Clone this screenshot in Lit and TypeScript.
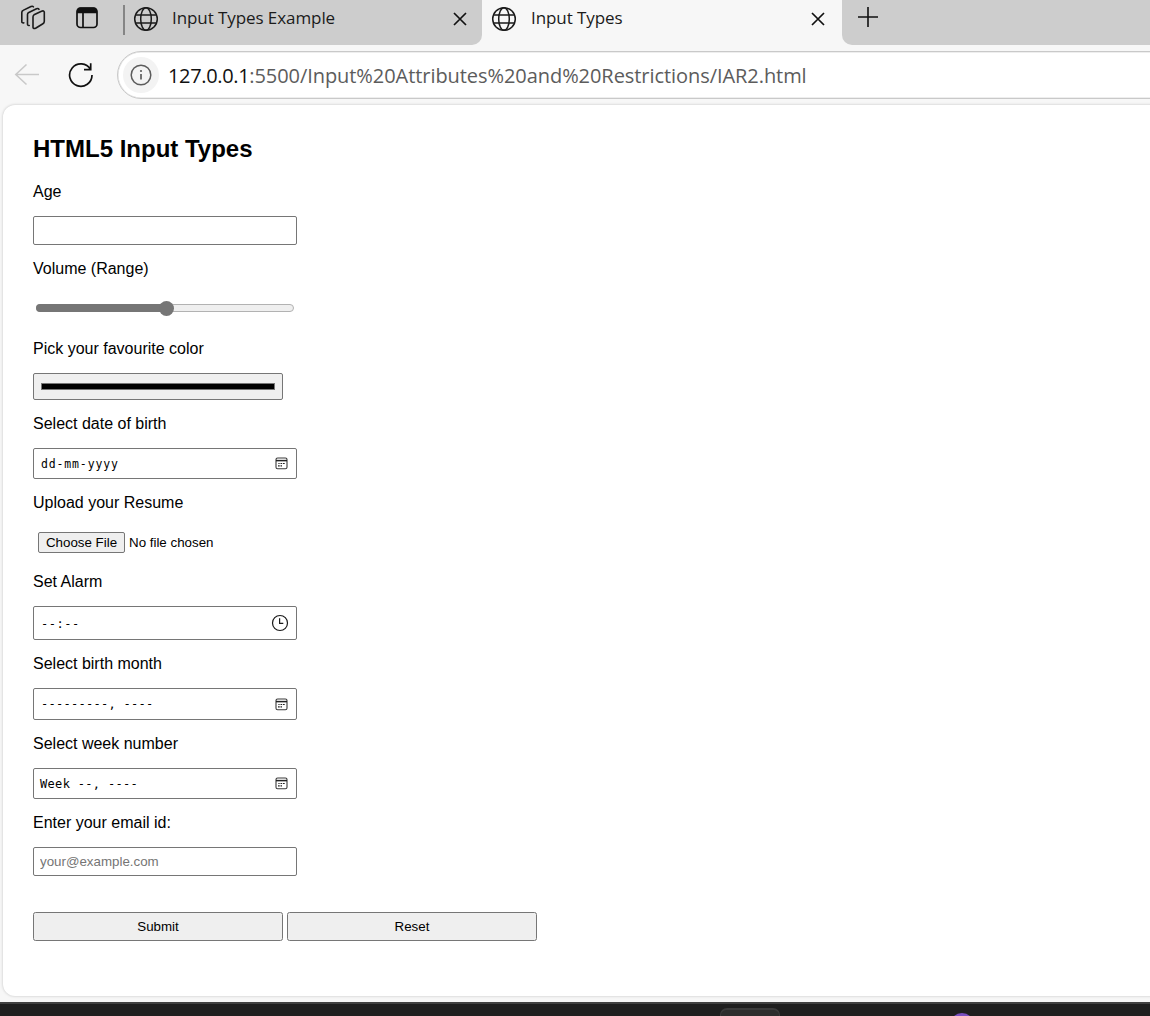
import { LitElement, html, css, svg } from "lit";
import { customElement } from "lit/decorators.js";

const globe = svg`<svg class="ic" width="26" height="26" viewBox="0 0 26 26" fill="none" stroke="#1b1b1b" stroke-width="1.5">
  <circle cx="13" cy="13" r="11.3"/><ellipse cx="13" cy="13" rx="5.3" ry="11.3"/><path d="M2.6 8.9h20.8M2.6 17.1h20.8"/></svg>`;
const cross = svg`<svg class="ic" width="14" height="14" viewBox="0 0 14 14" fill="none" stroke="#111" stroke-width="1.7"><path d="M1 1l12 12M13 1L1 13"/></svg>`;
const calendar = svg`<svg class="ic" width="13" height="13" viewBox="0 0 13 13" fill="none" stroke="#3a3a3a" stroke-width="1.1">
  <rect x="1" y="1" width="11" height="10.8" rx="1.6"/><path d="M1 3.6h11" stroke-width="1.5" stroke="#222"/>
  <path d="M5.5 6.5h1.700M8 6.5h1.700M3 8.900h1.700M5.500 8.900h1.500M3.400 6.500h1.200" stroke-width="1.200" stroke="#222"/></svg>`;
const clock = svg`<svg class="ic clock" width="18" height="18" viewBox="0 0 18 18" fill="none" stroke="#1a1a1a" stroke-width="1.2"><circle cx="9" cy="9" r="7.500"/><path d="M8.600 4.200v5.200h3.700"/></svg>`;

@customElement("browser-chrome")
class BrowserChrome extends LitElement {
  static styles = css`
    :host { display: block; font-family: "Open Sans", "Noto Sans", sans-serif; background: #f7f7f7; }
    .ic { display: block; flex: none; }
    .tabs { display: flex; height: 45px; background: #f7f7f7; }
    .left { display: flex; box-sizing: border-box; width: 482px; background: #cdcdcd; border-radius: 0 0 10px 0; padding-left: 19px; }
    .right { flex: 1; background: #cdcdcd; border-radius: 0 0 0 10px; padding: 6px 0 0 15px; }
    .spaces { margin-top: 4px; }
    .panel { margin: 6px 0 0 29px; }
    .sep { width: 1.500px; height: 30px; margin: 5px 8.500px 0 25px; background: #858585; }
    .tab { display: flex; height: 37px; align-items: center; flex: 1; }
    .active { box-sizing: border-box; flex: none; width: 360px; padding-left: 9px; }
    .title { flex: 1; margin: -2px 0 0 13px; font-size: 17px; line-height: 24px; color: #1b1b1b; white-space: nowrap; letter-spacing: -0.08px; }
    .t2 { margin-left: 14px; }
    .close { margin-right: 15px; }
    .active .close { margin-right: 17px; }
    .bar { display: flex; height: 60px; overflow: hidden; }
    .back { margin: 18px 0 0 14px; }
    .reload { margin: 17px 0 0 28px; }
    .pill { display: flex; align-items: center; box-sizing: border-box; width: 1100px; flex: none; height: 48px; margin: 6px 0 0 22px;
      border: 1px solid #c9c9c9; border-radius: 24px; background: #fff; padding-left: 5px; box-shadow: inset 0 0 0 0.500px #dedede; }
    .info { display: grid; place-items: center; width: 36px; height: 36px; border-radius: 50%; background: #f3f3f3; }
    .url { margin: 1px 0 0 9px; font-size: 20px; letter-spacing: -0.062px; color: #5c5c5c; white-space: nowrap; line-height: 28px; }
    .host { color: #111; letter-spacing: -0.350px; }
  `;
  render() {
    return html`
      <div class="tabs">
        <div class="left">
          <svg class="ic spaces" width="28" height="28" viewBox="0 0 28 28" fill="none" stroke="#1b1b1b" stroke-width="1.6" stroke-linejoin="round" stroke-linecap="round">
            <path d="M15 10.800L22.500 7.200q2.500-1 2.800 1V17.300q0 1.700-1.400 2.500L17 24Q14.300 25.300 14 23.300V13q0-1.500 1-2.200Z"/>
            <path d="M10.200 21.500q-1.700.3-1.700-1.500V10.500q0-1.500 1.300-2.100L17.500 4.800q1.800-.7 2.500.5"/>
            <path d="M4.800 18.900q-2 .3-2-1.500V8.400q0-1.400 1.300-2L12 2.500q1.700-.7 2.400.4"/>
          </svg>
          <svg class="ic panel" width="22" height="23" viewBox="0 0 22 23" fill="none" stroke="#111" stroke-width="1.7">
            <rect x="1" y="2" width="20" height="19.500" rx="3.500"/><path d="M1 7V5q0-3.500 3.500-3.500h13Q21 1.500 21 5v2Z" fill="#111" stroke="none"/><path d="M1 6.500h20M7 7v14.500"/>
          </svg>
          <div class="sep"></div>
          <div class="tab">${globe}<span class="title">Input Types Example</span><span class="close">${cross}</span></div>
        </div>
        <div class="tab active">${globe}<span class="title t2">Input Types</span><span class="close">${cross}</span></div>
        <div class="right"><svg class="ic" width="22" height="22" viewBox="0 0 22 22" stroke="#111" stroke-width="1.6"><path d="M11 1v20M1 11h20"/></svg></div>
      </div>
      <div class="bar">
        <svg class="ic back" width="26" height="24" viewBox="0 0 26 24" fill="none" stroke="#c9c9c9" stroke-width="1.6"><path d="M25 11.500H2M12.500 1.500L1.800 11.500L12.500 21.500"/></svg>
        <svg class="ic reload" width="27" height="27" viewBox="0 0 27 27" fill="none" stroke="#111" stroke-width="1.700"><path d="M22.500 7.500A11.200 11.200 0 1 0 24 13M22.700 1.200v6.500h-6.700"/></svg>
        <div class="pill">
          <span class="info"><svg class="ic" width="22" height="22" viewBox="0 0 22 22" fill="none" stroke="#5c5c5c" stroke-width="1.500"><circle cx="11" cy="11" r="9.800"/><path d="M11 10v5.500" stroke-width="1.700"/><circle cx="11" cy="7" r="1.100" fill="#5c5c5c" stroke="none"/></svg></span>
          <span class="url"><span class="host">127.0.0.1</span>:5500/Input%20Attributes%20and%20Restrictions/IAR2.html</span>
        </div>
      </div>`;
  }
}

@customElement("input-form")
class InputForm extends LitElement {
  static styles = css`
    :host { display: block; font-family: "Liberation Sans", Arial, sans-serif; color: #000; }
    .ic { display: block; flex: none; }
    .clock { margin-right: -1px; }
    .form { padding: 30px 0 0 30px; }
    .h { margin: 0 0 20px; font-size: 24px; line-height: 28px; font-weight: 700; }
    .label { display: block; font-size: 16px; line-height: 18px; margin-bottom: 15px; }
    .box { display: flex; align-items: center; justify-content: space-between; box-sizing: border-box; width: 264px; height: 29px; margin: 0 0 15px;
      border: 1px solid #767676; border-radius: 2px; background: #fff; padding: 0 8px 0 7px; font-size: 13.333px; font-family: inherit; outline: none; }
    .h31 { height: 31px; } .h32 { height: 32px; } .h34 { height: 34px; }
    .mono { font-family: "DejaVu Sans Mono", monospace; font-size: 12px; letter-spacing: 0.27px; white-space: pre; line-height: 16px; }
    .dmy { font-size: 11.500px; letter-spacing: 0.850px; }
    .time { letter-spacing: 0.500px; padding-top: 2px; }
    .week { margin-left: -1px; font-size: 12px; letter-spacing: 0.320px; }
    .email { padding-left: 6px; }
    .email::placeholder { color: #757575; }
    .range { display: flex; align-items: center; width: 258px; height: 32px; margin: 0 3px 15px; }
    .track { display: flex; align-items: center; box-sizing: border-box; width: 258px; height: 8px; margin-top: -2px; border: 1px solid #b2b2b2; border-radius: 4px; background: #efefef; }
    .fill { flex: none; width: 130px; height: 8px; margin-left: -1px; border-radius: 4px 0 0 4px; background: #767676; }
    .thumb { flex: none; width: 15px; height: 15px; margin-left: -7.500px; border-radius: 50%; background: #767676; }
    .color { display: flex; align-items: center; box-sizing: border-box; width: 250px; height: 27px; margin-bottom: 15px; padding: 0 7px; border: 1px solid #767676; border-radius: 2px; background: #efefef; }
    .swatch { box-sizing: border-box; width: 234px; height: 7px; background: #000; border: 1px solid #777; }
    .file { display: flex; align-items: center; gap: 4px; height: 31px; padding-left: 5px; margin-bottom: 15px; font-size: 13.333px; }
    .btn { box-sizing: border-box; font: 13.333px "Liberation Sans", Arial, sans-serif; color: #000; border: 1px solid #767676; border-radius: 2px; background: #efefef; padding: 0; margin: 0; }
    .choose { width: 87px; height: 21px; }
    .actions { display: flex; gap: 4px; padding-top: 21px; }
    .wide { width: 250px; height: 29px; border-radius: 2.500px; }
  `;
  render() {
    return html`<div class="form">
      <h2 class="h">HTML5 Input Types</h2>
      <span class="label">Age</span><input class="box" />
      <span class="label">Volume (Range)</span>
      <div class="range"><div class="track"><div class="fill"></div><div class="thumb"></div></div></div>
      <span class="label">Pick your favourite color</span>
      <div class="color"><div class="swatch"></div></div>
      <span class="label">Select date of birth</span>
      <div class="box h31"><span class="mono dmy">dd-mm-yyyy</span>${calendar}</div>
      <span class="label">Upload your Resume</span>
      <div class="file"><button class="btn choose">Choose File</button><span>No file chosen</span></div>
      <span class="label">Set Alarm</span>
      <div class="box h34"><span class="mono time">--:--</span>${clock}</div>
      <span class="label">Select birth month</span>
      <div class="box h32"><span class="mono">---------, ----</span>${calendar}</div>
      <span class="label">Select week number</span>
      <div class="box h31"><span class="mono week">Week --, ----</span>${calendar}</div>
      <span class="label">Enter your email id:</span>
      <input class="box email" placeholder="your@example.com" />
      <div class="actions"><button class="btn wide">Submit</button><button class="btn wide">Reset</button></div>
    </div>`;
  }
}

@customElement("app-root")
class AppRoot extends LitElement {
  static styles = css`
    :host { display: flex; flex-direction: column; width: 1150px; height: 1016px; overflow: hidden; background: #f7f7f7; }
    .page { box-sizing: border-box; width: 1170px; height: 891px; margin-left: 3px; background: #fff; border-radius: 12px; box-shadow: 0 0 3px rgba(0, 0, 0, 0.22); flex: none; }
    .taskbar { display: flex; align-items: flex-start; box-sizing: border-box; height: 14px; margin-top: 6px; border-top: 2px solid #414141; background: #1f1f1f; overflow: hidden; padding: 4px 0 0 720px; }
    .item { flex: none; box-sizing: border-box; width: 60px; height: 40px; border-radius: 7px; background: #2d2d2d; border: 1px solid #3b3b3b; border-top: 2px solid #3b3b3b; }
    .dot { flex: none; width: 24px; height: 24px; margin: 5px 0 0 170px; border-radius: 50%; background: #7a4fc0; }
  `;
  render() {
    return html`<browser-chrome></browser-chrome>
      <div class="page"><input-form></input-form></div>
      <div class="taskbar"><div class="item"></div><div class="dot"></div></div>`;
  }
}
